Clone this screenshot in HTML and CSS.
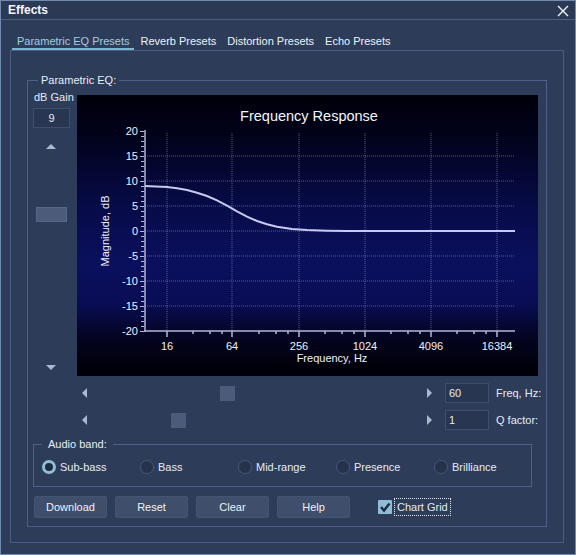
FILE: index.html
```html
<!DOCTYPE html>
<html>
<head>
    <title>Effects</title>
    <link rel="stylesheet" href="styles.css">
</head>
<body>
    <div class="window">
        <div class="titlebar">
            <span class="title">Effects</span>
            <svg class="close" width="12" height="12" viewBox="0 0 12 12">
                <path d="M1 1 L11 11 M11 1 L1 11" stroke="#f2f5fa" stroke-width="1.4" fill="none"/>
            </svg>
        </div>

        <div class="tabs">
            <span class="tab active">Parametric EQ Presets</span>
            <span class="tab">Reverb Presets</span>
            <span class="tab">Distortion Presets</span>
            <span class="tab">Echo Presets</span>
        </div>

        <div class="tab-panel">
            <fieldset class="group">
                <legend>Parametric EQ:</legend>

                <div class="eq-area">
                    <!-- dB Gain, vertical slider -->
                    <div class="gain-col">
                        <div class="gain-label">dB Gain</div>
                        <div class="textbox gain-box">9</div>
                        <div class="arrow-up"></div>
                        <div class="thumb-v"></div>
                        <div class="arrow-down"></div>
                    </div>

                    <div class="chart">
                        <svg width="461" height="281" viewBox="0 0 461 281">
                            <text class="chart-title" x="232" y="26" text-anchor="middle">Frequency Response</text>

                            <!-- grid -->
                            <g class="grid">
                                <line x1="68" y1="61" x2="438" y2="61"/>
                                <line x1="68" y1="86" x2="438" y2="86"/>
                                <line x1="68" y1="111" x2="438" y2="111"/>
                                <line x1="68" y1="136" x2="438" y2="136"/>
                                <line x1="68" y1="161" x2="438" y2="161"/>
                                <line x1="68" y1="186" x2="438" y2="186"/>
                                <line x1="68" y1="211" x2="438" y2="211"/>
                                <line x1="90" y1="38" x2="90" y2="236"/>
                                <line x1="155" y1="38" x2="155" y2="236"/>
                                <line x1="222" y1="38" x2="222" y2="236"/>
                                <line x1="288" y1="38" x2="288" y2="236"/>
                                <line x1="354" y1="38" x2="354" y2="236"/>
                                <line x1="420" y1="38" x2="420" y2="236"/>
                            </g>

                            <!-- axes and ticks -->
                            <g class="axis">
                                <line x1="68" y1="35" x2="68" y2="237" stroke-width="2"/>
                                <line x1="67" y1="236" x2="438" y2="236" stroke-width="2"/>
                                <line class="ticks-minor" x1="65.5" y1="36" x2="65.5" y2="237"/>
                                <line class="ticks-major" x1="64" y1="36" x2="64" y2="237"/>
                                <line x1="90" y1="236" x2="90" y2="242"/>
                                <line x1="116" y1="236" x2="116" y2="239"/>
                                <line x1="133" y1="236" x2="133" y2="239"/>
                                <line x1="145" y1="236" x2="145" y2="239"/>
                                <line x1="155" y1="236" x2="155" y2="242"/>
                                <line x1="182" y1="236" x2="182" y2="239"/>
                                <line x1="199" y1="236" x2="199" y2="239"/>
                                <line x1="211" y1="236" x2="211" y2="239"/>
                                <line x1="222" y1="236" x2="222" y2="242"/>
                                <line x1="248" y1="236" x2="248" y2="239"/>
                                <line x1="265" y1="236" x2="265" y2="239"/>
                                <line x1="277" y1="236" x2="277" y2="239"/>
                                <line x1="288" y1="236" x2="288" y2="242"/>
                                <line x1="314" y1="236" x2="314" y2="239"/>
                                <line x1="331" y1="236" x2="331" y2="239"/>
                                <line x1="343" y1="236" x2="343" y2="239"/>
                                <line x1="354" y1="236" x2="354" y2="242"/>
                                <line x1="380" y1="236" x2="380" y2="239"/>
                                <line x1="397" y1="236" x2="397" y2="239"/>
                                <line x1="409" y1="236" x2="409" y2="239"/>
                                <line x1="420" y1="236" x2="420" y2="242"/>
                            </g>

                            <!-- y labels -->
                            <g class="tick-label" text-anchor="end">
                                <text x="61" y="40">20</text>
                                <text x="61" y="65">15</text>
                                <text x="61" y="90">10</text>
                                <text x="61" y="115">5</text>
                                <text x="61" y="140">0</text>
                                <text x="61" y="165">-5</text>
                                <text x="61" y="190">-10</text>
                                <text x="61" y="215">-15</text>
                                <text x="61" y="240">-20</text>
                            </g>

                            <!-- x labels -->
                            <g class="tick-label" text-anchor="middle">
                                <text x="90" y="255">16</text>
                                <text x="155" y="255">64</text>
                                <text x="222" y="255">256</text>
                                <text x="288" y="255">1024</text>
                                <text x="354" y="255">4096</text>
                                <text x="420" y="255">16384</text>
                            </g>

                            <text class="axis-title" x="255" y="267" text-anchor="middle">Frequency, Hz</text>
                            <text class="axis-title" x="0" y="0" text-anchor="middle" transform="translate(32 136) rotate(-90)">Magnitude, dB</text>

                            <polyline class="curve" points="68,91 90,92 100,93.2 110,95 120,97.7 130,101 140,105.4 150,110.7 160,116.3 170,121.6 180,126 190,129.3 200,131.7 215,133.9 230,135 250,135.7 270,136 438,136"/>
                        </svg>
                    </div>
                </div>

                <div class="slider-row">
                    <div class="arrow-left"></div>
                    <div class="track"><div class="thumb" style="margin-left: 133px"></div></div>
                    <div class="arrow-right"></div>
                    <div class="textbox value-box">60</div>
                    <span class="value-label">Freq, Hz:</span>
                </div>
                <div class="slider-row">
                    <div class="arrow-left"></div>
                    <div class="track"><div class="thumb" style="margin-left: 84px"></div></div>
                    <div class="arrow-right"></div>
                    <div class="textbox value-box">1</div>
                    <span class="value-label">Q factor:</span>
                </div>

                <fieldset class="band">
                    <legend>Audio band:</legend>
                    <div class="radios">
                        <label class="radio-item"><span class="radio on"></span>Sub-bass</label>
                        <label class="radio-item"><span class="radio"></span>Bass</label>
                        <label class="radio-item"><span class="radio"></span>Mid-range</label>
                        <label class="radio-item"><span class="radio"></span>Presence</label>
                        <label class="radio-item"><span class="radio"></span>Brilliance</label>
                    </div>
                </fieldset>

                <div class="buttons">
                    <button>Download</button>
                    <button>Reset</button>
                    <button>Clear</button>
                    <button>Help</button>
                    <label class="check-item">
                        <span class="checkbox">
                            <svg width="14" height="14" viewBox="0 0 14 14">
                                <path d="M3 7 L6 10.5 L11.5 3.5" stroke="#1c2a40" stroke-width="2.4" fill="none"/>
                            </svg>
                        </span>
                        <span class="check-text">Chart Grid</span>
                    </label>
                </div>
            </fieldset>
        </div>
    </div>
</body>
</html>
```

FILE: styles.css
```css
body {
    margin: 0;
    background-color: #2d3c59;
    font-family: "Liberation Sans", Arial, sans-serif;
    font-size: 11px;
    color: #e4ebf4;
}
.window {
    width: 576px;
    height: 555px;
    box-sizing: border-box;
    border: 1px solid #6f8bb0;
    background-color: #2d3c59;
    display: flex;
    flex-direction: column;
}
.titlebar {
    height: 18px;
    border-bottom: 1px solid #4a5f84;
    display: flex;
    align-items: center;
    justify-content: space-between;
    padding: 0 6px 0 7px;
    background-color: #2b3955;
}
.title {
    font-weight: bold;
    font-size: 12px;
    color: #f4f7fb;
}
.close {
    margin-top: 1px;
}
.tabs {
    display: flex;
    gap: 1px;
    margin: 14px 0 0 11px;
}
.tab {
    padding: 0 5px;
    line-height: 14px;
    border-bottom: 2px solid transparent;
    color: #eef2f8;
}
.tab.active {
    color: #a7cbe0;
    border-bottom-color: #7fb6cf;
}
.tab-panel {
    flex: 1;
    margin: 0 11px 11px 9px;
    border: 1px solid #4a5e82;
    padding: 22px 16px 0 16px;
}
fieldset {
    margin: 0;
    border: 1px solid #4d6186;
    min-width: 0;
}
legend {
    line-height: 14px;
    color: #e8eef6;
}
.group {
    padding: 4px 6px 8px 6px;
}
.group > legend {
    margin-left: 4px;
    padding: 0 3px;
}
.eq-area {
    display: flex;
}
.gain-col {
    width: 43px;
    display: flex;
    flex-direction: column;
}
.gain-label {
    line-height: 13px;
}
.textbox {
    box-sizing: border-box;
    height: 20px;
    background-color: #283651;
    border: 1px solid #3d4e6e;
    line-height: 18px;
}
.gain-box {
    margin: 4px 0 0 -1px;
    width: 37px;
    text-align: center;
}
.arrow-up, .arrow-down {
    width: 0;
    height: 0;
    margin-left: 12px;
    border-left: 5px solid transparent;
    border-right: 5px solid transparent;
}
.arrow-up {
    margin-top: 16px;
    border-bottom: 5px solid #aab9d0;
}
.arrow-down {
    margin-top: 143px;
    border-top: 5px solid #aab9d0;
}
.thumb-v {
    margin: 58px 0 0 2px;
    width: 31px;
    height: 15px;
    background-color: #4b5b79;
    border: 1px solid #56678a;
    box-sizing: border-box;
}
.chart {
    margin-top: 4px;
    width: 461px;
    height: 281px;
    background: linear-gradient(to bottom, #00000a 0%, #01021a 14%, #070b48 40%, #0b105e 60%, #090d55 74%, #03041e 87%, #000005 100%);
}
.chart svg {
    display: block;
}
.chart-title {
    fill: #f4f4fa;
    font-size: 14.5px;
}
.grid line {
    stroke: #7a7ab6;
    stroke-width: 1;
    stroke-dasharray: 1 1;
    opacity: 0.7;
}
.axis line {
    stroke: #b6b6d4;
    stroke-width: 1.5;
}
.axis .ticks-minor {
    stroke-width: 3;
    stroke-dasharray: 1 4;
}
.axis .ticks-major {
    stroke-width: 2;
    stroke-dasharray: 1 24;
}
.tick-label, .axis-title {
    fill: #f0f0f8;
    font-size: 11px;
}
.curve {
    fill: none;
    stroke: #c9c9ef;
    stroke-width: 2;
}
.slider-row {
    display: flex;
    align-items: center;
    height: 20px;
    margin-top: 7px;
}
.arrow-left, .arrow-right {
    width: 0;
    height: 0;
    flex-shrink: 0;
    border-top: 5px solid transparent;
    border-bottom: 5px solid transparent;
}
.arrow-left {
    margin-left: 48px;
    border-right: 5px solid #aab9d0;
}
.arrow-right {
    border-left: 5px solid #aab9d0;
}
.track {
    width: 340px;
    flex-shrink: 0;
    display: flex;
}
.thumb {
    width: 15px;
    height: 15px;
    background-color: #4b5b79;
}
.value-box {
    margin-left: 13px;
    width: 44px;
    flex-shrink: 0;
    padding-left: 3px;
}
.value-label {
    margin-left: 7px;
    white-space: nowrap;
}
.band {
    margin: 7px 8px 0 -1px;
    padding: 9px 4px 12px 8px;
}
.band > legend {
    margin-left: 0;
    padding: 0 6px;
}
.radios {
    display: flex;
}
.radio-item {
    width: 98px;
    flex-shrink: 0;
    display: flex;
    align-items: center;
    gap: 4px;
}
.radio {
    box-sizing: border-box;
    width: 14px;
    height: 14px;
    border-radius: 50%;
    background-color: #25324b;
    border: 1px solid #45577a;
}
.radio.on {
    border: 3px solid #8fbed5;
    background-color: #1f2b42;
}
.buttons {
    display: flex;
    align-items: center;
    gap: 8px;
    margin-top: 9px;
}
button {
    width: 73px;
    height: 22px;
    padding: 0;
    font-family: "Liberation Sans", Arial, sans-serif;
    font-size: 11px;
    color: #eef2f8;
    background-color: #3e4e6b;
    border: 1px solid #445574;
    border-radius: 2px;
}
.check-item {
    margin-left: 20px;
    display: flex;
    align-items: center;
    gap: 2px;
}
.checkbox {
    width: 14px;
    height: 14px;
    background-color: #8ebed6;
    border-radius: 1px;
}
.checkbox svg {
    display: block;
}
.check-text {
    padding: 2px 2px;
    border: 1px dotted #dfe6f0;
}
```
